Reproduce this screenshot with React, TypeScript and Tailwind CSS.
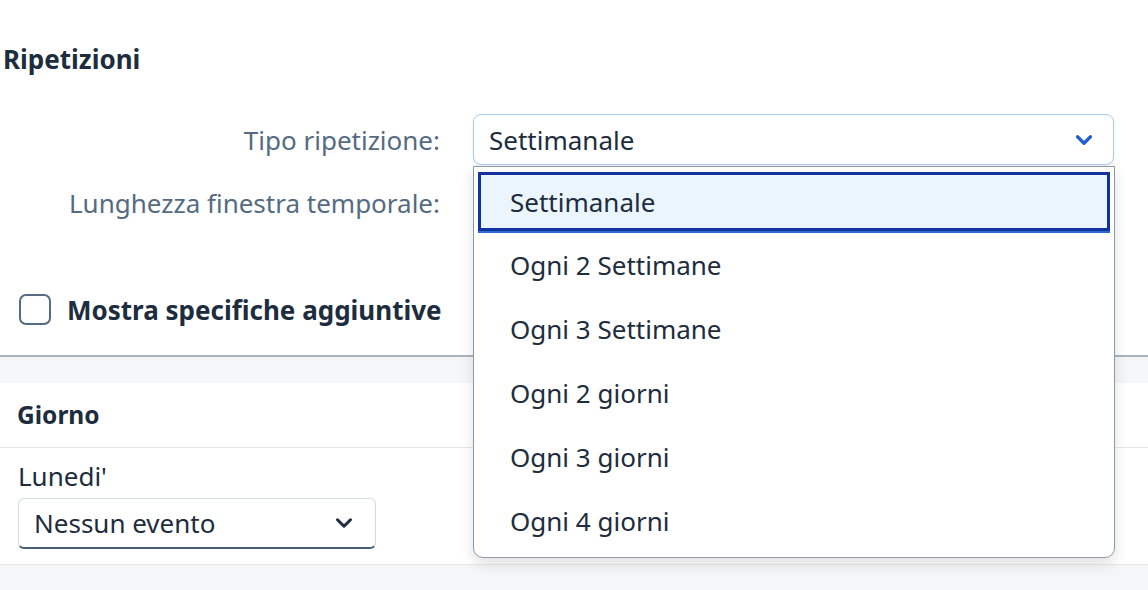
import { ChevronDown } from 'lucide-react';

const options = [
  'Settimanale',
  'Ogni 2 Settimane',
  'Ogni 3 Settimane',
  'Ogni 2 giorni',
  'Ogni 3 giorni',
  'Ogni 4 giorni',
];

function RepeatPopover() {
  return (
    <div className="absolute left-[-1px] top-[51px] z-10 h-[392px] w-[642px] rounded-b-[10px] border-[1.5px] border-[#8e99a6] bg-white pt-[5px] shadow-[0_6px_14px_rgba(0,0,0,0.12)]">
      <div className="mx-[4px] flex h-[59px] items-center border-[3px] border-[#15329a] bg-[#ebf5fe] pl-[29px] text-[26px] leading-none text-[#1d2d3e]">
        {options[0]}
      </div>
      <div className="mx-[4px] h-[2px] bg-[#2a6bd6]" />
      {options.slice(1).map((o) => (
        <div key={o} className="flex h-[64px] items-center pl-[36px] text-[26px] leading-none text-[#1d2d3e]">
          {o}
        </div>
      ))}
    </div>
  );
}

export default function App() {
  return (
    <div
      className="relative h-[590px] w-[1148px] overflow-hidden bg-white text-[#1d2d3e]"
      style={{ fontFamily: '"Noto Sans", Inter, sans-serif' }}
    >
      <h2 className="pl-[3px] pt-[44px] text-[26px] font-bold leading-[30px]">Ripetizioni</h2>

      <div className="mt-[40px] flex items-center gap-[33px]">
        <label className="w-[440px] text-right text-[26px] leading-none text-[#556b82]">Tipo ripetizione:</label>
        <div className="relative flex h-[51px] w-[641px] items-center justify-between rounded-[8px] border-[1.5px] border-[#a9cbf6] pl-[15px] pr-[16px] shadow-[0_1px_3px_rgba(0,0,0,0.08)]">
          <span className="text-[26px] leading-none">Settimanale</span>
          <ChevronDown size={26} strokeWidth={3} className="text-[#1f5fcf]" />
          <RepeatPopover />
        </div>
      </div>

      <div className="mt-[12px] flex h-[51px] items-center gap-[33px]">
        <label className="w-[440px] text-right text-[26px] leading-none text-[#556b82]">
          Lunghezza finestra temporale:
        </label>
      </div>

      <div className="mt-[66px] flex items-center gap-[16px] pl-[19px]">
        <span className="h-[31px] w-[32px] rounded-[7px] border-[2px] border-[#556b82]" />
        <span className="text-[26px] font-bold leading-none">Mostra specifiche aggiuntive</span>
      </div>

      <div className="mt-[30px] h-[28px] border-t-[2px] border-[#a9b4be] bg-[#f5f6f7]" />

      <div className="flex h-[65px] items-center border-b border-[#e5e7ea] pl-[17px] text-[24.5px] font-bold">
        Giorno
      </div>

      <div className="pl-[18px] pt-[13px]">
        <div className="text-[26px] leading-[30px]">Lunedi'</div>
        <div className="mt-[7px] flex h-[51px] w-[358px] items-center justify-between rounded-[6px] border border-b-[2px] border-[#d5dade] border-b-[#475e75] pl-[15px] pr-[18px]">
          <span className="text-[26px] leading-none">Nessun evento</span>
          <ChevronDown size={26} strokeWidth={2.8} className="text-[#1d2d3e]" />
        </div>
      </div>

      <div className="mt-[15px] h-[40px] border-t border-[#e5e7ea] bg-[#f5f6f7]" />
    </div>
  );
}
